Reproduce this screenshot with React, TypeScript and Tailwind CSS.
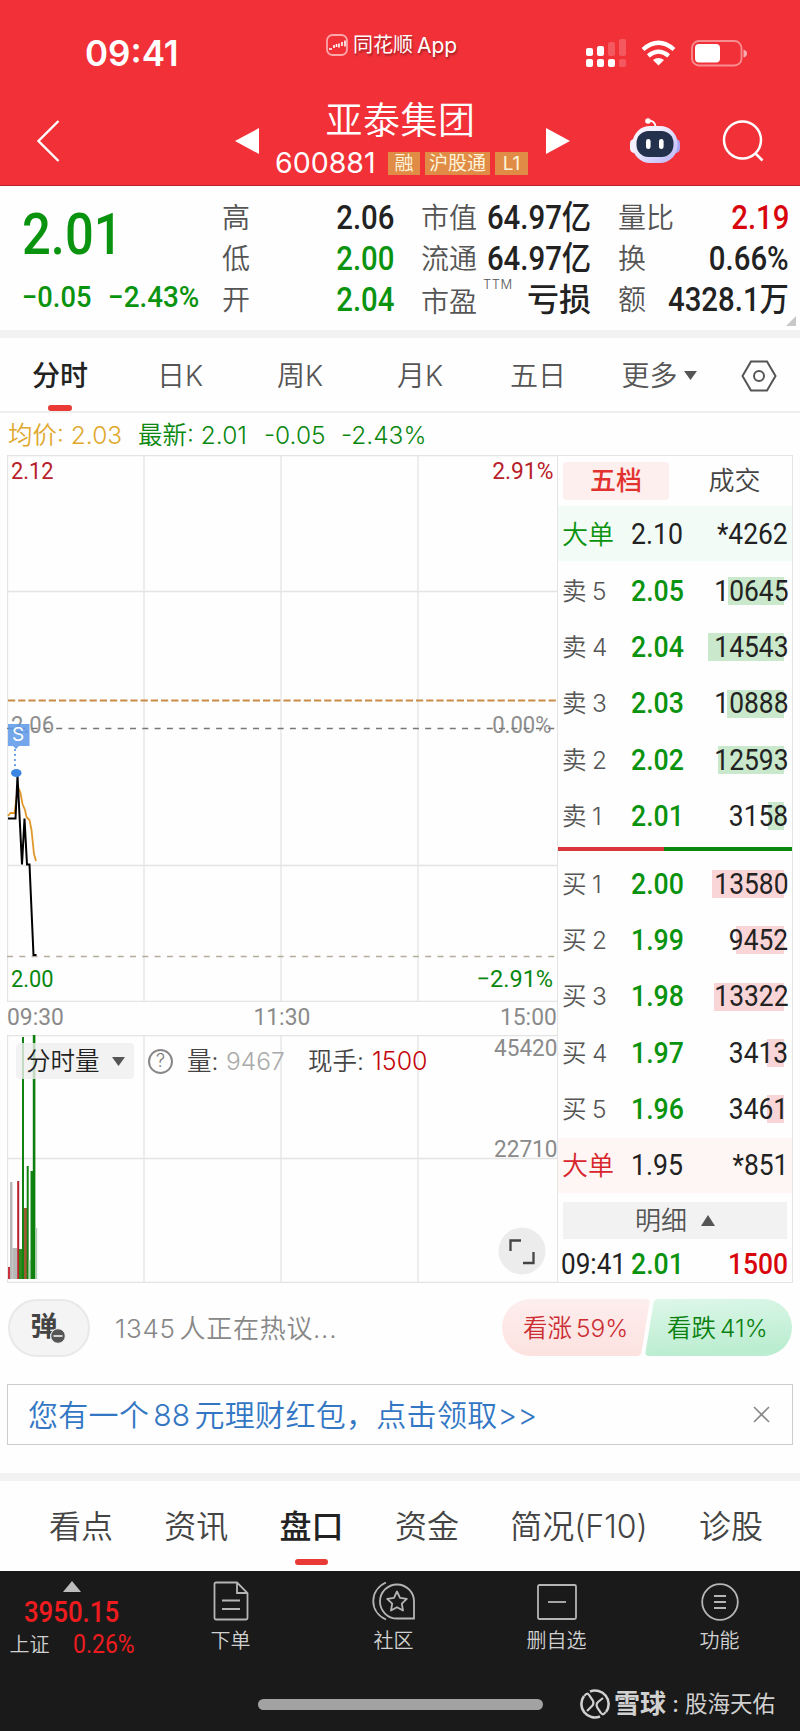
import React from "react";
import clsx from "clsx";

const sellRows = [
  { label: "卖5", price: "2.05", volume: "10645", bar: 56 },
  { label: "卖4", price: "2.04", volume: "14543", bar: 76 },
  { label: "卖3", price: "2.03", volume: "10888", bar: 57 },
  { label: "卖2", price: "2.02", volume: "12593", bar: 66 },
  { label: "卖1", price: "2.01", volume: "3158", bar: 16 },
];

const buyRows = [
  { label: "买1", price: "2.00", volume: "13580", bar: 72 },
  { label: "买2", price: "1.99", volume: "9452", bar: 48 },
  { label: "买3", price: "1.98", volume: "13322", bar: 70 },
  { label: "买4", price: "1.97", volume: "3413", bar: 17 },
  { label: "买5", price: "1.96", volume: "3461", bar: 17 },
];

// x, width, top, colour (top is measured inside the 248px volume pane)
const volumeBars: [number, number, number, string][] = [
  [1, 2.5, 232, "#c8323c"],
  [3, 2.5, 147, "#b8b8b8"],
  [5.5, 5, 213, "#b8b8b8"],
  [10.2, 2, 146, "#b8222c"],
  [12, 3, 214, "#2f8a1c"],
  [15, 2, 2, "#128312"],
  [17, 3, 173, "#a05a30"],
  [19.7, 2, 131, "#128312"],
  [21.7, 2, 225, "#b4dcb8"],
  [23.5, 2.5, 136, "#128312"],
  [25.8, 2.6, 0, "#0d7f0d"],
  [28.4, 1.8, 193, "#b0ccb2"],
];

function Num({ children, className }: { children: React.ReactNode; className?: string }) {
  return (
    <span className={clsx("inline-block whitespace-nowrap font-['Roboto','Noto_Sans_CJK_SC',sans-serif] leading-none", className)}>
      {children}
    </span>
  );
}

function StatusBar() {
  return (
    <div className="flex h-[106px] items-center">
      <div className="w-[326px] pl-[85px] text-[35px] font-semibold leading-none">09:41</div>
      <div className="flex w-[260px] items-center pb-4 text-[20px] leading-none [text-shadow:1px_2px_2px_rgba(0,0,0,0.35)]">
        <svg width="22" height="22" viewBox="0 0 22 22" fill="none">
          <rect x="1" y="1" width="20" height="20" rx="5.5" stroke="#fba6a8" strokeWidth="1.8" />
          <path d="M3 15h3M8 11v3M10.5 10v3M13 9.500v4M16 8v4M19 6.500v6" stroke="#fff" strokeWidth="1.6" />
        </svg>
        <span className="ml-[5px]">同花顺</span>
        <span className="ml-1 text-[21px]">App</span>
      </div>
      <svg width="162" height="30" viewBox="0 0 162 30" fill="#fff">
        <rect x="0" y="10" width="7" height="8" rx="2" />
        <rect x="11" y="8" width="7" height="10" rx="2" />
        <rect x="22" y="4" width="7" height="14" rx="2" opacity="0.2" />
        <rect x="33" y="1" width="7" height="17" rx="2" opacity="0.2" />
        <rect x="0" y="21" width="7" height="8" rx="2" />
        <rect x="11" y="21" width="7" height="8" rx="2" />
        <rect x="22" y="21" width="7" height="8" rx="2" />
        <rect x="33" y="21" width="7" height="8" rx="2" opacity="0.2" />
        <path d="M72.500 27.500l-5.500-5.400q5.500-4.200 11 0z" />
        <path d="M62.300 17.800q10.200-8.200 20.400 0" fill="none" stroke="#fff" strokeWidth="4.200" />
        <path d="M57 11.500q15.500-13.500 31 0" fill="none" stroke="#fff" strokeWidth="4.200" />
        <rect x="106" y="3" width="49.500" height="24.500" rx="7" fill="none" stroke="#fff" strokeOpacity="0.45" strokeWidth="1.800" />
        <rect x="109" y="6" width="25" height="18.500" rx="4" />
        <path d="M157.500 11.500q3.500 1 3.500 4t-3.500 4z" opacity="0.6" />
      </svg>
    </div>
  );
}

function Robot() {
  return (
    <svg width="50" height="46" viewBox="0 0 50 46">
      <defs>
        <linearGradient id="shell" x1="0" y1="0" x2="1" y2="1">
          <stop offset="0.300" stopColor="#f4f2ff" />
          <stop offset="1" stopColor="#b9b4fa" />
        </linearGradient>
      </defs>
      <path d="M18 3q7-1 7.500 6" fill="none" stroke="#fff" strokeWidth="1.800" />
      <circle cx="18" cy="3" r="2.800" fill="#fff" />
      <rect x="0" y="21" width="9" height="14" rx="4.500" fill="#f4f2ff" />
      <rect x="41" y="21" width="9" height="14" rx="4.500" fill="#aaa5f2" />
      <rect x="2.500" y="8" width="45" height="37" rx="17.500" fill="url(#shell)" />
      <rect x="6.500" y="13" width="37" height="26" rx="12" fill="#23314c" />
      <rect x="16" y="21" width="4.600" height="10" rx="2.300" fill="#fff" />
      <rect x="29" y="21" width="4.600" height="10" rx="2.300" fill="#fff" />
    </svg>
  );
}

function Header() {
  return (
    <header className="h-[186px] border-b border-[#b9252f] bg-[#f13038] text-white">
      <StatusBar />
      <div className="flex h-[70px] items-center">
        <svg className="ml-[37px]" width="23" height="42" viewBox="0 0 23 42" fill="none" stroke="#fff" strokeWidth="2.400">
          <path d="M21.500 1L1.500 21l20 20" />
        </svg>
        <svg className="ml-[175px]" width="24" height="28" viewBox="0 0 24 28" fill="#fff">
          <path d="M24 1v26L0 14z" />
        </svg>
        <div className="-mt-1 flex w-[287px] flex-col items-center">
          <div className="-ml-1 pb-[13px] text-[37px] font-[350] leading-9 tracking-[0.5px]">亚泰集团</div>
          <div className="-ml-0.5 flex h-6 items-center">
            <span className="w-[113px] text-[28.5px] leading-none">600881</span>
            <div className="flex gap-[5px] text-[19px] leading-[23px] text-[#fdf3da]">
              <span className="h-[23px] w-8 bg-[#e18c46] text-center">融</span>
              <span className="h-[23px] w-[65px] bg-[#e18c46] text-center">沪股通</span>
              <span className="h-[23px] w-[33px] bg-[#e18c46] text-center">L1</span>
            </div>
          </div>
        </div>
        <svg width="24" height="28" viewBox="0 0 24 28" fill="#fff">
          <path d="M0 1v26l24-13z" />
        </svg>
        <div className="ml-[60px]">
          <Robot />
        </div>
        <svg className="ml-[42px]" width="42" height="42" viewBox="0 0 42 42" fill="none" stroke="#fff" strokeWidth="2.500">
          <circle cx="20.500" cy="20" r="18.500" />
          <path d="M33 33l7.500 7.500" />
        </svg>
      </div>
    </header>
  );
}

function QuoteRow({ label, sup, children }: { label: string; sup?: string; children: React.ReactNode }) {
  return (
    <div className="flex h-[41px] items-center">
      <span className={clsx("flex w-0 whitespace-nowrap text-[28px] font-[350] leading-none text-[#555]", sup && "pt-1")}>
        {label}
        {sup && <span className="ml-1.5 -mt-2.5 text-[13px] leading-none tracking-[0.5px]">{sup}</span>}
      </span>
      <div className="flex flex-1 justify-end">{children}</div>
    </div>
  );
}

function Quote() {
  const value = "origin-right scale-x-[0.89] text-[33px] font-medium";
  return (
    <section className="relative flex h-36 pt-[11px]">
      <div className="w-[222px] pl-[22px] text-[#0a930f]">
        <Num className="mt-[9px] origin-left scale-x-[0.89] text-[57px] font-medium">2.01</Num>
        <div className="mt-5 flex">
          <Num className="w-[86px] origin-left scale-x-[0.94] text-[29px] font-medium">−0.05</Num>
          <Num className="origin-left scale-x-[0.96] text-[29px] font-medium">−2.43%</Num>
        </div>
      </div>
      <div className="w-[172px]">
        <QuoteRow label="高"><Num className={clsx(value, "text-[#222]")}>2.06</Num></QuoteRow>
        <QuoteRow label="低"><Num className={clsx(value, "text-[#0a930f]")}>2.00</Num></QuoteRow>
        <QuoteRow label="开"><Num className={clsx(value, "text-[#0a930f]")}>2.04</Num></QuoteRow>
      </div>
      <div className="ml-[27px] w-[170px]">
        <QuoteRow label="市值"><Num className={clsx(value, "text-[#222]")}>64.97亿</Num></QuoteRow>
        <QuoteRow label="流通"><Num className={clsx(value, "text-[#222]")}>64.97亿</Num></QuoteRow>
        <QuoteRow label="市盈" sup="TTM"><Num className="text-[32px] font-medium text-[#222]">亏损</Num></QuoteRow>
      </div>
      <div className="ml-[27px] w-[171px]">
        <QuoteRow label="量比"><Num className={clsx(value, "text-[#d8060c]")}>2.19</Num></QuoteRow>
        <QuoteRow label="换"><Num className={clsx(value, "text-[#222]")}>0.66%</Num></QuoteRow>
        <QuoteRow label="额"><Num className={clsx(value, "text-[#222]")}>4328.1万</Num></QuoteRow>
      </div>
      <svg className="absolute bottom-1 right-1" width="10" height="10" viewBox="0 0 10 10" fill="#c8c8c8">
        <path d="M10 0v10H0z" />
      </svg>
    </section>
  );
}

function PeriodTabs() {
  const tab = "flex w-[120px] shrink-0 justify-center";
  return (
    <nav className="flex h-[75px] items-center border-b-2 border-[#efefef] pt-0.5 text-[28px] font-[350] leading-none text-[#555]">
      <div className={clsx(tab, "relative h-full items-center font-medium text-[#222]")}>
        分时
        <span className="absolute bottom-0 h-1.5 w-6 rounded-full bg-[#ea3a36]" />
      </div>
      <div className={tab}>日K</div>
      <div className={tab}>周K</div>
      <div className={tab}>月K</div>
      <div className={clsx(tab, "pr-1")}>五日</div>
      <div className={clsx(tab, "items-center gap-1.5 pr-0.5")}>
        更多
        <svg width="13" height="9" viewBox="0 0 13 9" fill="#555"><path d="M0 0h13L6.500 9z" /></svg>
      </div>
      <svg className="ml-[21px]" width="36" height="32" viewBox="0 0 36 32" fill="none" stroke="#555" strokeWidth="2">
        <path d="M10 1.500h16L34.500 16 26 30.500H10L1.500 16z" />
        <circle cx="18" cy="16" r="5" />
      </svg>
    </nav>
  );
}

function PriceChart() {
  const label = "absolute text-[24px] font-[450]";
  return (
    <div className="relative h-[547px]">
      <svg className="block" width="551" height="547" viewBox="0 0 551 547" fill="none">
        <path d="M0.500 547V0.500H551M137 0v547M274 0v547M411 0v547M0 136.500h551M0 410.500h551M0 546.500h551" stroke="#e4e4e4" strokeWidth="1.300" />
      </svg>
      <Num className="absolute left-1 top-[258px] origin-left scale-x-[0.92] text-[24px] text-[#8e8e8e]">2.06</Num>
      <Num className="absolute right-1.5 top-[258px] origin-right scale-x-[0.92] text-[24px] text-[#8e8e8e]">0.00%</Num>
      <svg className="absolute left-0 top-0" width="551" height="547" viewBox="0 0 551 547" fill="none">
        <path d="M1 245.500h549" stroke="#c98b45" strokeWidth="2" strokeDasharray="7.200 3" />
        <path d="M0 273.500h550" stroke="#777" strokeWidth="1.400" strokeDasharray="6 6.300" />
        <path d="M0 501.500h550" stroke="#b5ad9a" strokeWidth="1.300" strokeDasharray="6 6.300" />
        <path d="M1 361l2.500-3h4l3.500-26 2.500 6 2 11 2.500 6 1.500 7 3 3 2 10 2.500 24 2 7" stroke="#e0982c" strokeWidth="1.800" />
        <path d="M1 363.500h7.500l2-42.500 4.500 88.500 2.500-46 2.500 46h2.500l4 90.500h3" stroke="#000" strokeWidth="2" />
        <path d="M1 269h21.500v22H12l-3 3-3-3H1z" fill="#5b97e6" fillOpacity="0.850" />
        <path d="M8 294v18" stroke="#4a90e2" strokeWidth="1.600" strokeDasharray="2 3" />
        <ellipse cx="9.300" cy="318" rx="5.300" ry="4" fill="#3d87e4" />
      </svg>
      <span className="absolute left-[5px] top-[270px] text-[19px] leading-none text-white">S</span>
      <Num className={clsx(label, "left-1 top-1 origin-left scale-x-[0.91] text-[#b8202a]")}>2.12</Num>
      <Num className={clsx(label, "right-[4px] top-1 origin-right scale-x-95 text-[#b8202a]")}>2.91%</Num>
      <Num className={clsx(label, "bottom-[11px] left-1 origin-left scale-x-[0.91] text-[#0a870f]")}>2.00</Num>
      <Num className={clsx(label, "bottom-[11px] right-[4px] origin-right scale-x-[0.98] text-[#0a870f]")}>−2.91%</Num>
    </div>
  );
}

function VolumeChart() {
  return (
    <div className="relative h-[248px]">
      <svg className="block" width="551" height="248" viewBox="0 0 551 248" fill="none">
        <path d="M0.500 0v248M137 0v248M274 0v248M411 0v248M0 0.500h551M0 123.500h551M0 247.500h551" stroke="#e4e4e4" strokeWidth="1.300" />
        {volumeBars.map(([x, width, top, fill]) => (
          <rect key={x} x={x} y={top} width={width} height={244 - top} fill={fill} />
        ))}
      </svg>
      <div className="absolute left-[9px] top-2 flex h-9 items-center text-[24.5px] font-[350] leading-none text-[#444]">
        <div className="flex h-9 w-[118px] items-center gap-3 rounded bg-[#efefef]/80 pl-2.5 text-[#222]">
          分时量
          <svg width="13" height="9" viewBox="0 0 13 9" fill="#555"><path d="M0 0h13L6.500 9z" /></svg>
        </div>
        <span className="ml-3.5 flex size-[25px] items-center justify-center rounded-full border-2 border-[#888] text-[18px] text-[#777]">?</span>
        <span className="ml-3.5 w-[39px]">量:</span>
        <span className="w-[82px] text-[#aaa]">9467</span>
        <span className="w-[64px]">现手:</span>
        <span className="text-[25px] text-[#c4060e]">1500</span>
      </div>
      <Num className="absolute right-0 top-px origin-right scale-x-[0.94] text-[24px] text-[#8a8a8a]">45420</Num>
      <Num className="absolute right-0 top-[102px] origin-right scale-x-[0.94] text-[24px] text-[#8a8a8a]">22710</Num>
      <svg className="absolute right-[11px] top-[192px]" width="48" height="48" viewBox="0 0 48 48" fill="none">
        <circle cx="24" cy="24" r="23.500" fill="#ececec" />
        <path d="M12.500 24V13.500H23M25 36h10.500V25" stroke="#444" strokeWidth="2.300" />
      </svg>
    </div>
  );
}

function DepthRow({ label, price, volume, bar, side }: { label: string; price: string; volume: string; bar: number; side: "buy" | "sell" }) {
  return (
    <div className="relative flex h-[56.3px] items-center pl-1 pr-1">
      <div
        className={clsx("absolute right-2 top-3.5 h-7", side === "buy" ? "bg-[#f9d5d8]" : "bg-[#cae8cb]")}
        style={{ width: bar }}
      />
      <span className="w-[30px] text-[24.5px] font-[350] leading-none text-[#555]">{label[0]}</span>
      <span className="w-[39px] text-[24.5px] font-[350] leading-none text-[#555]">{label[1]}</span>
      <Num className="origin-left scale-x-[0.92] text-[29px] font-medium text-[#0a930f]">{price}</Num>
      <Num className="relative ml-auto origin-right scale-x-[0.91] text-[29px] font-[450] text-[#222]">{volume}</Num>
    </div>
  );
}

function OrderBook() {
  return (
    <aside className="flex h-[828px] w-[236px] flex-col border border-[#e4e4e4]">
      <div className="flex h-[50px] items-center pl-[5px] text-[26px] leading-none">
        <div className="flex h-[38px] w-[106px] items-center justify-center rounded bg-[#fdefee] font-medium text-[#e2322f]">五档</div>
        <div className="ml-[13px] flex w-[105px] justify-center font-[350] text-[#444]">成交</div>
      </div>
      <div className="flex h-[55px] items-center bg-[#f3fbf7] pl-1 pr-1 pt-0.5">
        <span className="w-[69px] text-[26px] font-[350] leading-none text-[#0a930f]">大单</span>
        <Num className="origin-left scale-x-[0.92] text-[29px] font-[450] text-[#222]">2.10</Num>
        <Num className="ml-auto origin-right scale-x-[0.91] text-[29px] font-[450] text-[#222]">*4262</Num>
      </div>
      <div className="h-[286px] pt-0.5">
        {sellRows.map((row) => <DepthRow key={row.label} {...row} side="sell" />)}
      </div>
      <div className="flex h-1 shrink-0">
        <div className="w-[106px] bg-[#d8363b]" />
        <div className="flex-1 bg-[#0a870f]" />
      </div>
      <div className="h-[287px] pt-[5px]">
        {buyRows.map((row) => <DepthRow key={row.label} {...row} side="buy" />)}
      </div>
      <div className="flex h-[55px] items-center bg-[#fdf6f5] pl-1 pr-1">
        <span className="w-[69px] text-[26px] font-[350] leading-none text-[#d8262c]">大单</span>
        <Num className="origin-left scale-x-[0.92] text-[29px] font-[450] text-[#222]">1.95</Num>
        <Num className="ml-auto origin-right scale-x-[0.91] text-[29px] font-[450] text-[#222]">*851</Num>
      </div>
      <div className="mx-[5px] mt-[9px] flex h-[37px] shrink-0 items-center justify-center gap-3.5 bg-[#f2f2f2] text-[26px] font-[350] leading-none text-[#555]">
        明细
        <svg width="14" height="11" viewBox="0 0 14 11" fill="#555"><path d="M7 0l7 11H0z" /></svg>
      </div>
      <div className="flex flex-1 items-center pl-[3px] pr-1 pt-2">
        <Num className="w-[70px] origin-left scale-x-[0.9] text-[29px] font-[450] text-[#222]">09:41</Num>
        <Num className="origin-left scale-x-[0.92] text-[29px] font-medium text-[#0a930f]">2.01</Num>
        <Num className="ml-auto origin-right scale-x-[0.91] text-[29px] font-medium text-[#d8060c]">1500</Num>
      </div>
    </aside>
  );
}

function ChartArea() {
  return (
    <section className="h-[870px]">
      <div className="flex h-[42px] items-center pl-2 pt-0.5 text-[24.5px] font-[350] leading-none text-[#0a870f]">
        <span className="w-[130px] text-[#e0a92e]">均价: 2.03</span>
        <span className="w-[126px]">最新: 2.01</span>
        <span className="w-[77px]">-0.05</span>
        <span>-2.43%</span>
      </div>
      <div className="flex pl-[7px]">
        <div className="w-[550px] shrink-0">
          <PriceChart />
          <div className="flex h-[33px] items-center justify-between pb-[3px] text-[24px] text-[#8a8a8a]">
            <Num className="origin-left scale-x-95">09:30</Num>
            <Num className="scale-x-95">11:30</Num>
            <Num className="origin-right scale-x-95">15:00</Num>
          </div>
          <VolumeChart />
        </div>
        <OrderBook />
      </div>
    </section>
  );
}

function Discussion() {
  return (
    <section className="flex h-[89px] items-center pl-2 pr-2">
      <div className="relative flex h-[58px] w-[82px] items-center justify-center rounded-full border-2 border-[#e9e9e9] bg-[#f4f4f4] pb-0.5 pr-2.5 text-[27px] font-bold leading-none text-[#444]">
        弹
        <svg className="absolute left-[40px] top-[27px]" width="16" height="16" viewBox="0 0 16 16">
          <circle cx="8" cy="8" r="7.300" fill="#555" stroke="#f4f4f4" />
          <path d="M3.500 8h9" stroke="#fff" strokeWidth="1.500" />
        </svg>
      </div>
      <div className="ml-[25px] flex-1 pt-0.5 text-[26px] font-[350] leading-none tracking-[0.7px] text-[#888]">
        <span className="mr-1">1345</span>
        人正在热议...
      </div>
      <div className="relative h-[57px] w-[290px]">
        <svg className="absolute inset-0" width="290" height="57" viewBox="0 0 290 57">
          <defs>
            <linearGradient id="rise" x1="0" y1="0" x2="0" y2="1">
              <stop stopColor="#fdeeee" />
              <stop offset="1" stopColor="#fce2df" />
            </linearGradient>
            <linearGradient id="fall" x1="0" y1="0" x2="0.200" y2="1">
              <stop stopColor="#def7e9" />
              <stop offset="1" stopColor="#bbedd0" />
            </linearGradient>
          </defs>
          <path d="M28.500 0H144q4 0 3.500 4l-8 49q-1 4-4 4h-107a28.500 28.500 0 0 1 0-57z" fill="url(#rise)" />
          <path d="M155 0h106.500a28.500 28.500 0 0 1 0 57H147q-4 0-3.500-4l8-49q1-4 3.500-4z" fill="url(#fall)" />
        </svg>
        <div className="relative flex h-full items-center pt-0.5 text-[24.5px] font-[350] leading-none">
          <span className="w-[144px] pl-[21px] text-[#cc2d33]">看涨<span className="ml-1">59%</span></span>
          <span className="pl-[21px] text-[#0a800f]">看跌<span className="ml-1">41%</span></span>
        </div>
      </div>
    </section>
  );
}

function BottomNav() {
  const item = "flex w-[163px] shrink-0 flex-col items-center gap-2.5";
  return (
    <footer className="h-40 bg-[#1a1a1a] text-[#d0d0d0]">
      <div className="flex h-[125px] pt-2.5 text-[20px] font-[350] leading-none">
        <div className="flex w-[149px] flex-col items-center pr-1.5">
          <svg width="18" height="11" viewBox="0 0 18 11" fill="#bdbdbd"><path d="M9 0l9 11H0z" /></svg>
          <Num className="mt-1.5 scale-x-[0.89] text-[29px] font-medium text-[#ee1c1f]">3950.15</Num>
          <div className="mt-[5px] flex w-[150px] items-center pl-[13px]">
            <span className="w-[63px]">上证</span>
            <Num className="origin-left scale-x-[0.92] text-[25px] font-[450] text-[#ee1c1f]">0.26%</Num>
          </div>
        </div>
        <div className={item}>
          <svg width="36" height="40" viewBox="0 0 36 40" fill="none" stroke="#b5b5b5" strokeWidth="1.800">
            <path d="M24 1.500H3q-1.500 0-1.500 1.500v34q0 1.500 1.500 1.500h30q1.500 0 1.500-1.500V12zM24 1.500V12h10.500M9 19.500h18M9 28h18" />
          </svg>
          下单
        </div>
        <div className={item}>
          <svg width="44" height="40" viewBox="0 0 44 40" fill="none" stroke="#b5b5b5" strokeWidth="1.800">
            <path d="M14 1.500C-3 9-3 31 14 38.500" />
            <path d="M25 37.500A17 17 0 1 1 42 20.500v17z" />
            <path d="M25 10.500l3 6.300 6.800 1-5 4.800 1.200 6.900-6-3.300-6 3.300 1.200-6.900-5-4.800 6.800-1z" strokeLinejoin="round" />
          </svg>
          社区
        </div>
        <div className={item}>
          <svg width="40" height="40" viewBox="0 0 40 40" fill="none" stroke="#b5b5b5" strokeWidth="1.800">
            <rect x="1" y="4" width="38" height="34" rx="1.500" />
            <path d="M11 21h18" />
          </svg>
          删自选
        </div>
        <div className={item}>
          <svg width="40" height="40" viewBox="0 0 40 40" fill="none" stroke="#b5b5b5" strokeWidth="1.800">
            <circle cx="20" cy="21" r="17.800" />
            <path d="M14 15h12M14 21h12M14 27h12" />
          </svg>
          功能
        </div>
      </div>
      <div className="flex h-4 items-center pl-[258px]">
        <div className="h-[11px] w-[285px] rounded-full bg-[#a2a2a2]" />
        <svg className="ml-[37px]" width="30" height="30" viewBox="0 0 30 30" fill="none" stroke="#d0d0d0" strokeWidth="2.600">
          <path d="M10 2.500A13.500 13.500 0 0 1 26 23M20 27.500A13.500 13.500 0 0 1 4 7" />
          <path d="M4.500 7Q7 3 9 6l3.500 5q2 3.500-.5 6l-5 5M25.500 23q-2.500 4-4.500 1l-3.500-5q-2-3.500.5-6l5-4" strokeWidth="2.200" />
        </svg>
        <span className="ml-1 whitespace-nowrap text-[26px] font-bold leading-none">雪球</span>
        <span className="w-[19px] text-center text-[22px] font-medium leading-none">:</span>
        <span className="whitespace-nowrap text-[22.5px] leading-none">股海天佑</span>
      </div>
    </footer>
  );
}

export default function App() {
  return (
    <div className="h-[1731px] w-[800px] overflow-hidden bg-[#fefefe] font-['Inter','Noto_Sans_CJK_SC',sans-serif]">
      <Header />
      <Quote />
      <div className="h-2 bg-[#f2f2f2]" />
      <PeriodTabs />
      <ChartArea />
      <Discussion />
      {/* Promo banner */}
      <div className="mx-[7px] mt-[12px] flex h-[61px] items-center justify-between border border-[#cdcdcd] pl-[20px] pr-[22px] text-[30px] font-[350] leading-none text-[#3377c4]">
        <span className="tracking-[0.3px]">您有一个<span className="mx-1">88</span>元理财红包，点击领取&gt;&gt;</span>
        <svg width="17" height="17" viewBox="0 0 17 17" stroke="#888" strokeWidth="1.600"><path d="M1 1l15 15M16 1L1 16" /></svg>
      </div>
      <div className="mt-7 h-2 bg-[#f2f2f2]" />
      <nav className="flex h-[90px] items-center justify-between pl-[49px] pr-[37px] pt-0.5 text-[32px] font-[350] leading-none text-[#444]">
        <span>看点</span>
        <span>资讯</span>
        <span className="relative flex h-full items-center justify-center font-medium text-[#222]">
          盘口
          <span className="absolute bottom-1.5 h-1.5 w-[33px] rounded-full bg-[#ea3a36]" />
        </span>
        <span>资金</span>
        <span>简况(F10)</span>
        <span>诊股</span>
      </nav>
      <BottomNav />
    </div>
  );
}
